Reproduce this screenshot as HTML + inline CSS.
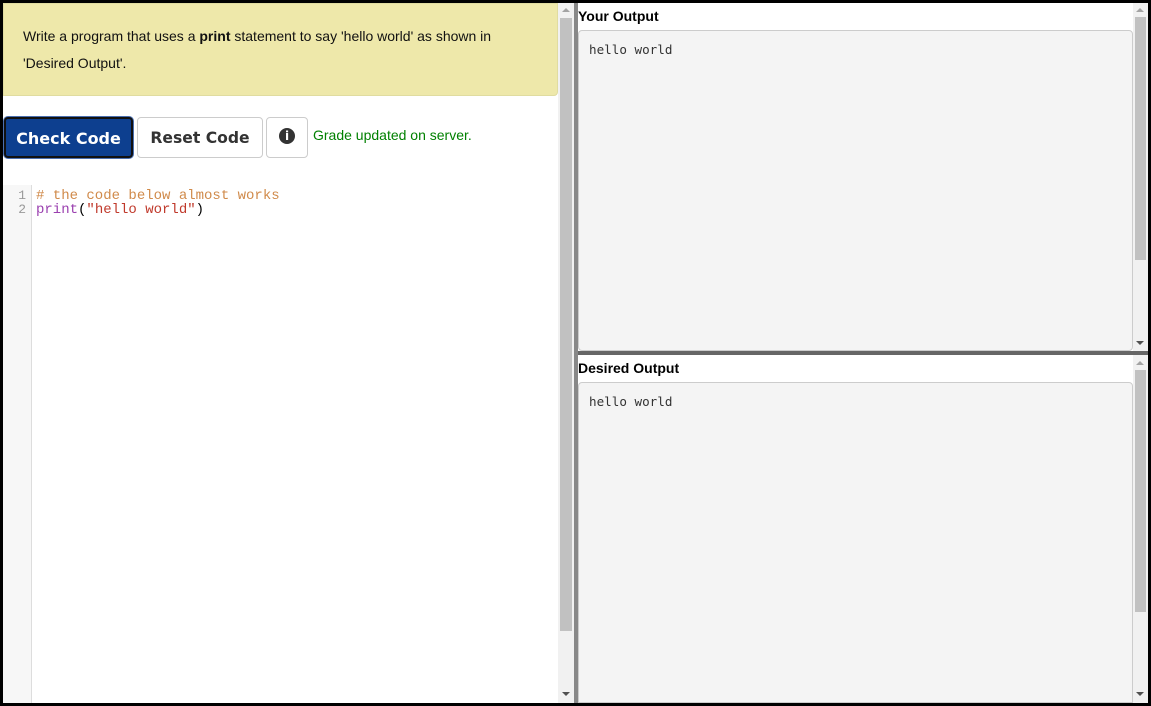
<!DOCTYPE html>
<html><head><style>
body{margin:0;width:1151px;height:706px;background:#000;position:relative;overflow:hidden;font-family:"Liberation Sans",sans-serif}
div{position:absolute;box-sizing:border-box}
.sb{background:#f1f1f1}
.th{background:#c1c1c1}
.up,.dn{width:0;height:0;border-left:4px solid transparent;border-right:4px solid transparent}
.up{border-bottom:4px solid #a3a3a3}
.dn{border-top:4px solid #505050}
.mono{font-family:"Liberation Mono",monospace;font-size:14px}
.out{font-family:"DejaVu Sans Mono",monospace;font-size:12.6px}
</style></head><body>
<div style="left:3px;top:3px;width:555px;height:700px;background:#fff"></div>
<div style="left:3px;top:3px;width:555px;height:93px;background:#eee8aa;border-radius:0 0 4px 0;border:1px solid #e0dca0"></div>
<div style="left:23px;top:23px;font-size:14px;line-height:27px;color:#111;width:500px">Write a program that uses a <b>print</b> statement to say 'hello world' as shown in 'Desired Output'.</div>
<div style="left:4px;top:117px;width:129px;height:41px;background:#0d3f8f;border:2px solid #111;border-radius:4px;box-shadow:0 0 0 1px #4a6fb0;color:#fff;font:bold 16px 'DejaVu Sans','Liberation Sans',sans-serif;text-align:center;line-height:39px">Check Code</div>
<div style="left:137px;top:117px;width:126px;height:41px;background:#fff;border:1px solid #ccc;border-radius:4px;color:#333;font:bold 15.6px 'DejaVu Sans','Liberation Sans',sans-serif;text-align:center;line-height:41px">Reset Code</div>
<div style="left:266px;top:117px;width:42px;height:41px;background:#fff;border:1px solid #ccc;border-radius:4px"></div>
<div style="left:279px;top:128px;width:16px;height:16px;border-radius:50%;background:#333;color:#fff;font:bold 12px 'DejaVu Sans',sans-serif;text-align:center;line-height:16px">i</div>
<div style="left:313px;top:127px;font-size:14px;color:#008000">Grade updated on server.</div>
<div style="left:3px;top:185px;width:29px;height:518px;background:#f7f7f7;border-right:1px solid #ddd"></div>
<div class="mono" style="left:3px;top:189px;width:23px;text-align:right;color:#999;line-height:14px;font-size:13px">1<br>2</div>
<div class="mono" style="left:36px;top:189px;line-height:14px;white-space:pre;color:#000"><span style="color:#d08a4a"># the code below almost works</span>
<span style="color:#9a3faf">print</span>(<span style="color:#c0392b">"hello world"</span>)</div>
<div class="sb" style="left:558px;top:3px;width:16px;height:700px"></div>
<div class="th" style="left:560px;top:18px;width:12px;height:613px"></div>
<div class="up" style="left:562px;top:8px"></div>
<div class="dn" style="left:562px;top:692px"></div>
<div style="left:574px;top:3px;width:4px;height:700px;background:#888"></div>
<div style="left:578px;top:3px;width:570px;height:348px;background:#fff"></div>
<div style="left:578px;top:8px;font-weight:bold;font-size:14px;color:#000">Your Output</div>
<div style="left:578px;top:30px;width:555px;height:321px;background:#f4f4f4;border:1px solid #ccc;border-radius:4px"></div>
<div class="out" style="left:589px;top:42px;color:#333">hello world</div>
<div class="sb" style="left:1133px;top:3px;width:15px;height:348px"></div>
<div class="th" style="left:1135px;top:17px;width:11px;height:243px"></div>
<div class="up" style="left:1136px;top:8px"></div>
<div class="dn" style="left:1136px;top:341px"></div>
<div style="left:578px;top:351px;width:570px;height:4px;background:#666"></div>
<div style="left:578px;top:355px;width:570px;height:348px;background:#fff"></div>
<div style="left:578px;top:360px;font-weight:bold;font-size:14px;color:#000">Desired Output</div>
<div style="left:578px;top:382px;width:555px;height:321px;background:#f4f4f4;border:1px solid #ccc;border-radius:4px 4px 0 0"></div>
<div class="out" style="left:589px;top:394px;color:#333">hello world</div>
<div class="sb" style="left:1133px;top:355px;width:15px;height:348px"></div>
<div class="th" style="left:1135px;top:370px;width:11px;height:242px"></div>
<div class="up" style="left:1136px;top:361px"></div>
<div class="dn" style="left:1136px;top:692px"></div>
</body></html>
